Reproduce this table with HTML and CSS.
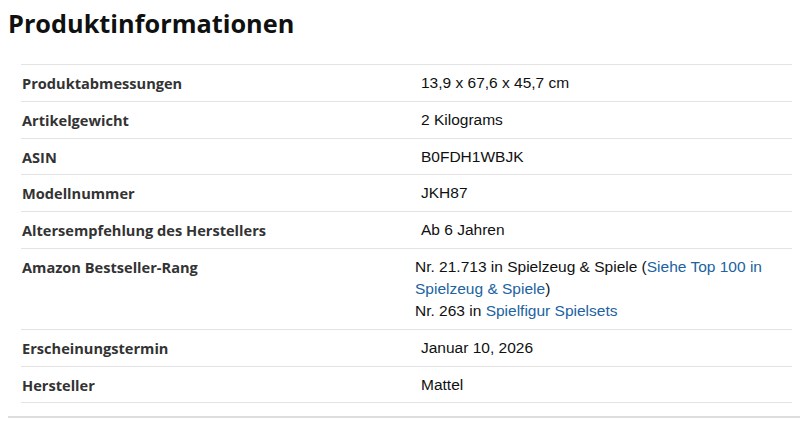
FILE: index.html
```html
<!DOCTYPE html>
<html lang="de">
<head>
<meta charset="utf-8">
<title>Produktinformationen</title>
<link rel="stylesheet" href="styles.css">
</head>
<body>
<section class="info">
  <h2 class="title">Produktinformationen</h2>
  <div class="table">
    <div class="row">
      <div class="label">Produktabmessungen</div>
      <div class="value pad">13,9 x 67,6 x 45,7 cm</div>
    </div>
    <div class="row">
      <div class="label">Artikelgewicht</div>
      <div class="value pad">2 Kilograms</div>
    </div>
    <div class="row">
      <div class="label">ASIN</div>
      <div class="value pad">B0FDH1WBJK</div>
    </div>
    <div class="row">
      <div class="label">Modellnummer</div>
      <div class="value pad">JKH87</div>
    </div>
    <div class="row">
      <div class="label">Altersempfehlung des Herstellers</div>
      <div class="value pad">Ab 6 Jahren</div>
    </div>
    <div class="row">
      <div class="label">Amazon Bestseller-Rang</div>
      <div class="value">
        <div>Nr. 21.713 in Spielzeug &amp; Spiele (<a class="link" href="#">Siehe Top 100 in Spielzeug &amp; Spiele</a>)</div>
        <div>Nr. 263 in <a class="link" href="#">Spielfigur Spielsets</a></div>
      </div>
    </div>
    <div class="row">
      <div class="label">Erscheinungstermin</div>
      <div class="value pad">Januar 10, 2026</div>
    </div>
    <div class="row last">
      <div class="label">Hersteller</div>
      <div class="value pad">Mattel</div>
    </div>
  </div>
  <div class="divider"></div>
</section>
</body>
</html>
```
FILE: styles.css
```css
html, body {
  margin: 0;
  padding: 0;
  background: #ffffff;
}

.info {
  padding: 7px 0 0 8px;
}

.title {
  margin: 0;
  font-family: "Open Sans", "Noto Sans", sans-serif;
  font-weight: 700;
  font-size: 25.3px;
  line-height: 32px;
  color: #0f1111;
}

.table {
  margin: 25px 8px 0 13px;
}

.row {
  display: grid;
  grid-template-columns: 394px 1fr;
  border-top: 1px solid #e3e3e3;
  padding: 7px 0 6.8px;
}

.row.last {
  border-bottom: 1px solid #e3e3e3;
}

.label {
  padding-left: 1px;
  font-family: "Open Sans", "Noto Sans", sans-serif;
  font-weight: 700;
  font-size: 14.6px;
  line-height: 22px;
  color: #333333;
}

.value {
  font-family: "Liberation Sans", Arial, sans-serif;
  font-size: 15.5px;
  line-height: 22px;
  color: #0f1111;
  padding-right: 8px;
}

.value.pad {
  padding-left: 6px;
}

.link {
  color: #2162a1;
  text-decoration: none;
}

.divider {
  margin-top: 13px;
  height: 2px;
  background: #dddddd;
}
```
